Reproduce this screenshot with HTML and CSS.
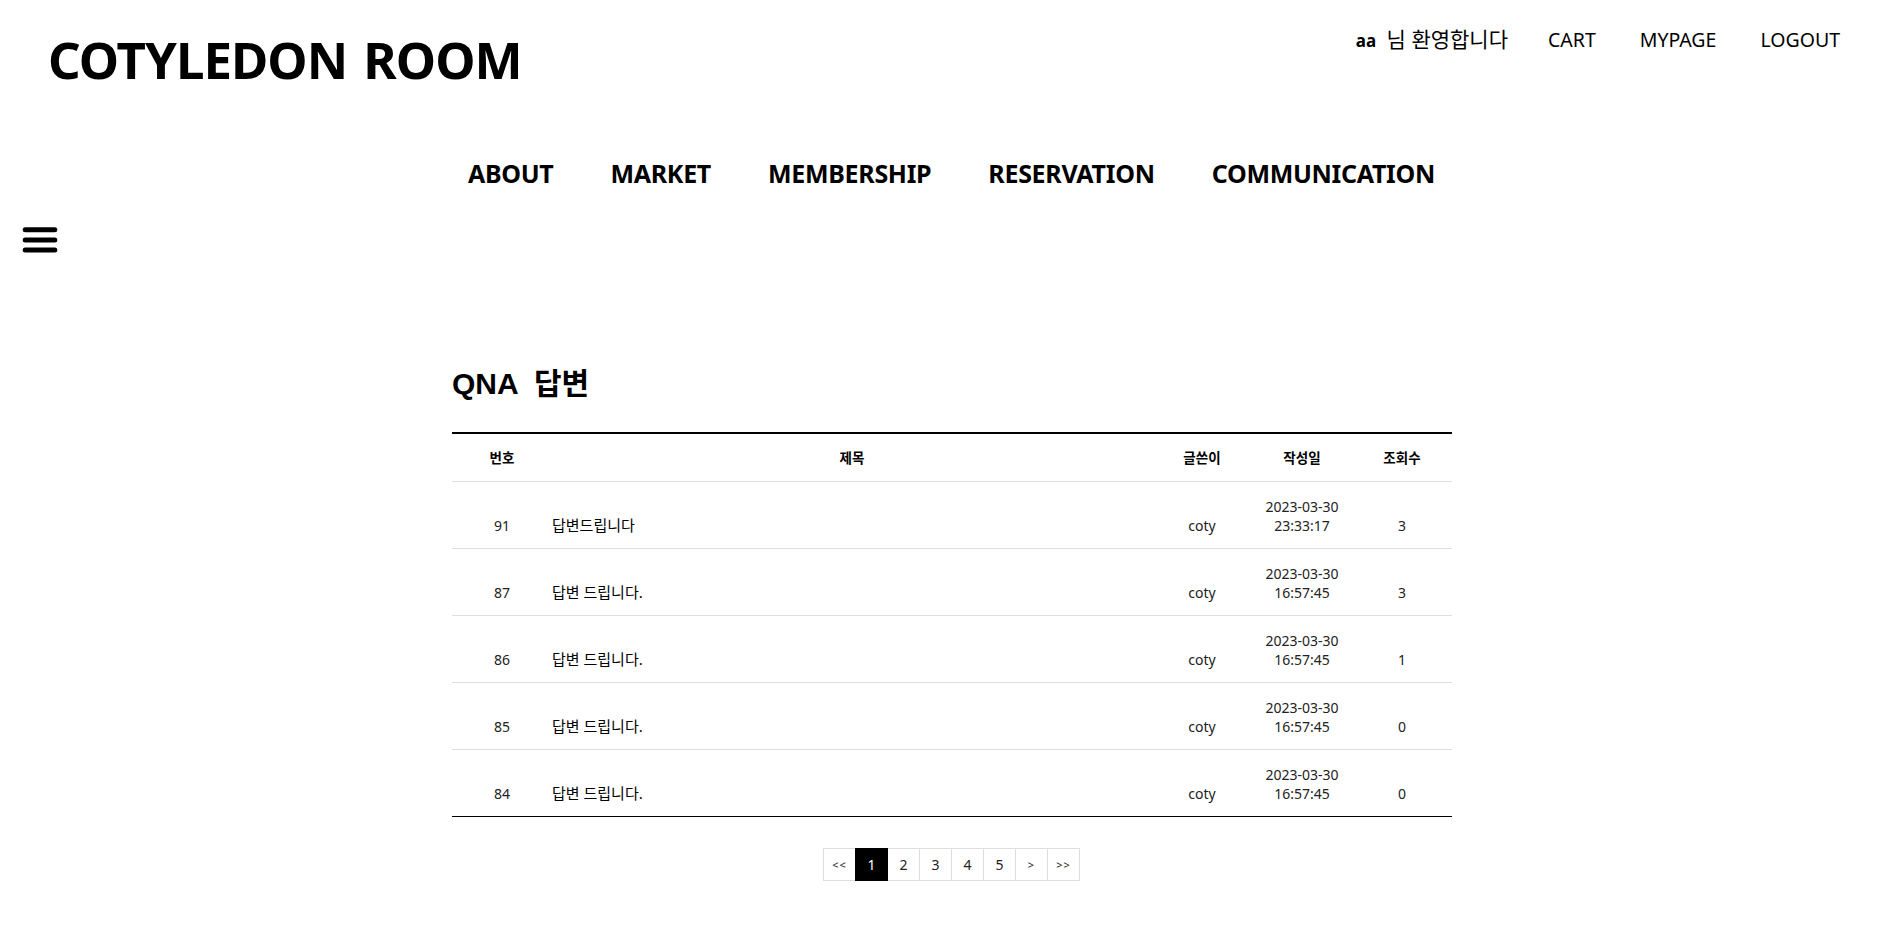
FILE: index.html
```html
<!DOCTYPE html>
<html lang="ko">
<head>
<meta charset="utf-8">
<title>COTYLEDON ROOM - QNA 답변</title>
<link rel="stylesheet" href="styles.css">
</head>
<body>
<header class="top">
  <h1 class="logo">COTYLEDON ROOM</h1>
  <ul class="util">
    <li class="welcome"><b>aa</b> 님 환영합니다</li>
    <li><a href="#">CART</a></li>
    <li><a href="#">MYPAGE</a></li>
    <li><a href="#">LOGOUT</a></li>
  </ul>
</header>
<nav class="gnb">
  <a href="#">ABOUT</a>
  <a href="#">MARKET</a>
  <a href="#">MEMBERSHIP</a>
  <a href="#">RESERVATION</a>
  <a href="#">COMMUNICATION</a>
</nav>
<div class="menu-btn">
  <svg width="40" height="30" viewBox="0 0 40 30" aria-hidden="true">
    <g stroke="#000" stroke-width="5" stroke-linecap="round">
      <line x1="5.2" y1="4.7" x2="34.8" y2="4.7"/>
      <line x1="5.2" y1="15" x2="34.8" y2="15"/>
      <line x1="5.2" y1="25" x2="34.8" y2="25"/>
    </g>
  </svg>
</div>
<main class="board">
  <h2 class="board-title">QNA 답변</h2>
  <table class="list">
    <colgroup>
      <col class="c-no"><col class="c-title"><col class="c-writer"><col class="c-date"><col class="c-hit">
    </colgroup>
    <thead>
      <tr><th>번호</th><th>제목</th><th>글쓴이</th><th>작성일</th><th>조회수</th></tr>
    </thead>
    <tbody>
      <tr><td>91</td><td class="t">답변드립니다</td><td>coty</td><td class="d">2023-03-30<br>23:33:17</td><td>3</td></tr>
      <tr><td>87</td><td class="t">답변 드립니다.</td><td>coty</td><td class="d">2023-03-30<br>16:57:45</td><td>3</td></tr>
      <tr><td>86</td><td class="t">답변 드립니다.</td><td>coty</td><td class="d">2023-03-30<br>16:57:45</td><td>1</td></tr>
      <tr><td>85</td><td class="t">답변 드립니다.</td><td>coty</td><td class="d">2023-03-30<br>16:57:45</td><td>0</td></tr>
      <tr><td>84</td><td class="t">답변 드립니다.</td><td>coty</td><td class="d">2023-03-30<br>16:57:45</td><td>0</td></tr>
    </tbody>
  </table>
  <div class="paging">
    <a href="#" class="arr">&lt;&lt;</a>
    <a href="#" class="on">1</a>
    <a href="#">2</a>
    <a href="#">3</a>
    <a href="#">4</a>
    <a href="#">5</a>
    <a href="#" class="arr">&gt;</a>
    <a href="#" class="arr">&gt;&gt;</a>
  </div>
</main>
</body>
</html>
```

FILE: styles.css
```css
* { box-sizing: border-box; }
html, body { margin: 0; padding: 0; background: #fff; }
body {
  font-family: "Noto Sans", "Noto Sans CJK KR", sans-serif;
  color: #000;
}
a { color: inherit; text-decoration: none; }
ul { list-style: none; margin: 0; padding: 0; }

.top {
  display: flex;
  justify-content: space-between;
  align-items: flex-start;
  padding: 0 58px 0 48px;
}
.logo {
  margin: 34px 0 0;
  font-size: 51px;
  line-height: 1;
  font-weight: 700;
  letter-spacing: -1px;
  word-spacing: 4px;
}
.util {
  display: flex;
  align-items: baseline;
  gap: 44px;
  margin-top: 29px;
  font-size: 19.5px;
  line-height: 1;
}
.util .welcome { font-size: 21px; margin-right: -4px; }
.util .welcome b { font-size: 17px; font-weight: 700; margin-right: 5px; }

.gnb {
  display: flex;
  justify-content: center;
  gap: 57px;
  margin-top: 76px;
  padding-left: 5px;
  font-size: 25px;
  line-height: 1;
  font-weight: 700;
  letter-spacing: -0.3px;
}

.menu-btn {
  margin-top: 39px;
  padding-left: 20px;
  height: 30px;
}
.menu-btn svg { display: block; }

.board {
  width: 1000px;
  margin: 114px auto 0;
  position: relative;
  left: 3px;
}
.board-title {
  margin: 0;
  font-family: "Liberation Sans", "Noto Sans CJK KR", sans-serif;
  font-size: 30px;
  line-height: 1;
  font-weight: 700;
  word-spacing: 8px;
}
.list {
  width: 1000px;
  margin-top: 33px;
  border-collapse: collapse;
  table-layout: fixed;
  border-top: 2px solid #000;
  border-bottom: 1px solid #000;
  font-size: 14px;
}
.c-no { width: 100px; }
.c-writer, .c-date, .c-hit { width: 100px; }
.list th {
  height: 48px;
  padding: 0;
  font-weight: 700;
  font-size: 13.5px;
  color: #000;
  border-bottom: 1px solid #ddd;
  text-align: center;
  vertical-align: middle;
}
.list td {
  padding: 14px 0 13px;
  line-height: 19px;
  color: #222;
  text-align: center;
  vertical-align: bottom;
  border-bottom: 1px solid #ddd;
}
.list tbody tr:last-child td { border-bottom: 1px solid #000; }
.list td.t { text-align: left; color: #000; font-size: 15px; }
.list td.d { font-size: 14px; padding-top: 15px; padding-bottom: 13px; }

.paging {
  display: flex;
  justify-content: center;
  margin-top: 31px;
}
.paging a {
  width: 33px;
  height: 33px;
  margin-left: -1px;
  border: 1px solid #ddd;
  display: flex;
  align-items: center;
  justify-content: center;
  font-size: 14px;
  color: #222;
}
.paging a.arr { font-size: 11px; letter-spacing: 1px; }
.paging a.on { background: #000; border-color: #000; color: #fff; position: relative; }
```
